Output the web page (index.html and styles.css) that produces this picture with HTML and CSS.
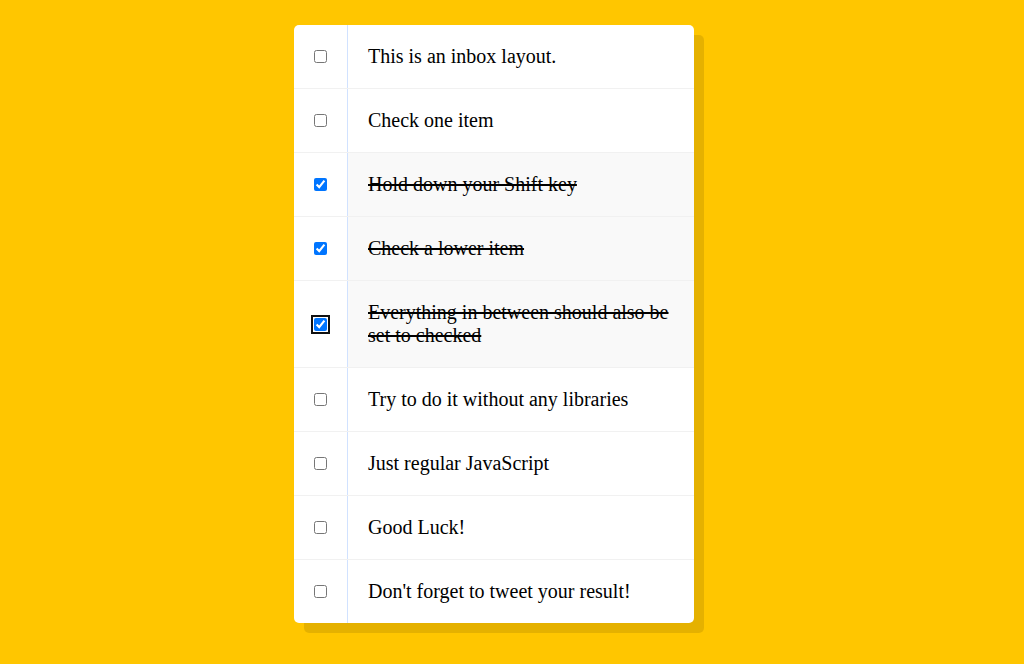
FILE: index.html
```html
<!DOCTYPE html>
<html>
<head>
<meta charset="utf-8">
<link rel="stylesheet" href="styles.css">
</head>
<body>
<div class="inbox">
  <div class="item"><input type="checkbox"><p>This is an inbox layout.</p></div>
  <div class="item"><input type="checkbox"><p>Check one item</p></div>
  <div class="item"><input type="checkbox" checked><p>Hold down your Shift key</p></div>
  <div class="item"><input type="checkbox" checked><p>Check a lower item</p></div>
  <div class="item"><input type="checkbox" class="focused" checked><p>Everything in between should also be set to checked</p></div>
  <div class="item"><input type="checkbox"><p>Try to do it without any libraries</p></div>
  <div class="item"><input type="checkbox"><p>Just regular JavaScript</p></div>
  <div class="item"><input type="checkbox"><p>Good Luck!</p></div>
  <div class="item"><input type="checkbox"><p>Don't forget to tweet your result!</p></div>
</div>
</body>
</html>
```
FILE: styles.css
```css
html {
  background: #ffc600;
  font-family: "Liberation Serif", "Times New Roman", serif;
}
body {
  margin: 0;
  padding: 25px 36px 25px 0;
}
.inbox {
  width: 400px;
  margin: 0 auto;
  background: #ffffff;
  border-radius: 5px;
  box-shadow: 10px 10px 0 rgba(0, 0, 0, 0.1);
}
.item {
  display: flex;
  align-items: center;
  border-bottom: 1px solid #f1f1f1;
}
.item:last-child {
  border-bottom: 0;
}
.item input[type="checkbox"] {
  margin: 20px;
  width: 13px;
  height: 13px;
}
.item input.focused {
  outline: 2px solid #101010;
  outline-offset: 1px;
  border-radius: 2px;
}
.item p {
  margin: 0;
  padding: 20px;
  flex: 1;
  font-size: 20px;
  line-height: 23px;
  border-left: 1px solid #d1e2ff;
  color: #000;
}
.item input:checked + p {
  background: #f9f9f9;
  text-decoration: line-through;
}
```
